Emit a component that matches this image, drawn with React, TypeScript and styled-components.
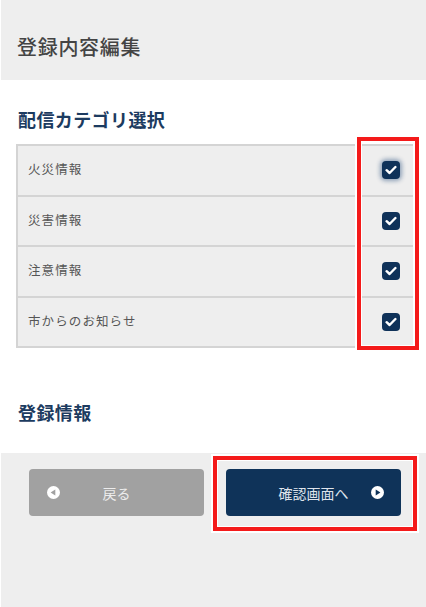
import React from 'react';
import styled, { createGlobalStyle } from 'styled-components';

const GlobalStyle = createGlobalStyle`
  html, body {
    margin: 0;
    padding: 0;
    background: #ffffff;
  }
  body {
    font-family: "Noto Sans CJK JP", "Noto Sans", sans-serif;
  }
`;

const Page = styled.div`
  min-height: 100vh;
  display: flex;
  flex-direction: column;
  padding-left: 1px;
  box-sizing: border-box;
`;

const Header = styled.header`
  height: 80px;
  background: #eeeeee;
  display: flex;
  align-items: center;
  padding: 12px 0 0 16px;
  box-sizing: border-box;
`;

const PageTitle = styled.h1`
  margin: 0;
  font-size: 20px;
  font-weight: 500;
  letter-spacing: 0.7px;
  color: #444444;
`;

const Main = styled.main`
  padding: 27px 13px 29px 15px;
`;

const SectionTitle = styled.h2<{ $gap?: number }>`
  margin: 0 0 ${p => p.$gap ?? 13}px 2px;
  font-size: 18px;
  line-height: 24px;
  font-weight: 700;
  letter-spacing: 0.4px;
  color: #1c3b60;
`;

const CategoryTable = styled.div`
  position: relative;
  border-left: 2px solid #d4d4d4;
  border-bottom: 2px solid #d4d4d4;
  margin-bottom: 52px;
`;

const Row = styled.div`
  display: flex;
  align-items: center;
  height: 50.5px;
  box-sizing: border-box;
  border-top: 2px solid #d4d4d4;
  background: #eeeeee;
`;

const Label = styled.span`
  flex: 1;
  padding: 0 0 3px 10px;
  font-size: 12.5px;
  letter-spacing: 1.1px;
  color: #555555;
`;

const CheckCell = styled.div`
  width: 51px;
  display: flex;
  justify-content: center;
  padding-left: 6px;
  box-sizing: border-box;
`;

const CheckBox = styled.span<{ $focused?: boolean }>`
  width: 18px;
  height: 18px;
  border-radius: 4px;
  background: #0f3259;
  display: flex;
  align-items: center;
  justify-content: center;
  box-shadow: ${p => (p.$focused ? '0 0 4px 2px rgba(30, 70, 120, 0.45)' : 'none')};
`;

const Highlight = styled.div`
  position: absolute;
  border: 4px solid #f41a1a;
  box-shadow: 0 0 0 2px #ffffff, inset 0 0 0 1px #ffffff;
  pointer-events: none;
  box-sizing: border-box;
`;

const ColumnHighlight = styled(Highlight)`
  top: -7px;
  bottom: -4px;
  right: -6px;
  width: 62px;
`;

const Footer = styled.footer`
  flex: 1;
  background: #eeeeee;
  display: flex;
  gap: 22px;
  padding: 16px 25px 0 28px;
  align-items: flex-start;
`;

const ButtonSlot = styled.div`
  position: relative;
  flex: 1;
  display: flex;
`;

const ButtonHighlight = styled(Highlight)`
  top: -13px;
  bottom: -15px;
  left: -13px;
  right: -16px;
`;

const NavButton = styled.button<{ $primary?: boolean }>`
  flex: 1;
  height: 47px;
  border: none;
  border-radius: 4px;
  background: ${p => (p.$primary ? '#0f3359' : '#a1a1a1')};
  color: ${p => (p.$primary ? '#dfe4ec' : '#ececec')};
  font-family: inherit;
  font-size: 14px;
  display: grid;
  grid-template-columns: 48px 1fr 48px;
  align-items: center;
  padding: 0;
  cursor: pointer;
`;

const IconSlot = styled.span`
  display: flex;
  justify-content: center;
`;

const CheckMark = () => (
  <svg width="12" height="10" viewBox="0 0 12 10">
    <polyline
      points="1.6,5.2 4.6,8 10.4,2"
      fill="none"
      stroke="#ffffff"
      strokeWidth="2.4"
      strokeLinecap="round"
      strokeLinejoin="round"
    />
  </svg>
);

const CircleArrow = ({ dir, color }: { dir: 'left' | 'right'; color: string }) => (
  <svg width="13" height="13" viewBox="0 0 13 13">
    <circle cx="6.5" cy="6.5" r="6.5" fill="#ffffff" />
    {dir === 'left' ? (
      <polygon points="8.3,3.4 8.3,9.6 3.6,6.5" fill={color} />
    ) : (
      <polygon points="4.7,3.4 4.7,9.6 9.4,6.5" fill={color} />
    )}
  </svg>
);

const categories = ['火災情報', '災害情報', '注意情報', '市からのお知らせ'];

export default function App() {
  return (
    <Page>
      <GlobalStyle />
      <Header>
        <PageTitle>登録内容編集</PageTitle>
      </Header>

      <Main>
        <SectionTitle>配信カテゴリ選択</SectionTitle>
        <CategoryTable>
          {categories.map((name, i) => (
            <Row key={name}>
              <Label>{name}</Label>
              <CheckCell>
                <CheckBox $focused={i === 0}>
                  <CheckMark />
                </CheckBox>
              </CheckCell>
            </Row>
          ))}
          <ColumnHighlight />
        </CategoryTable>

        <SectionTitle $gap={0}>登録情報</SectionTitle>
      </Main>

      <Footer>
        <ButtonSlot>
          <NavButton>
            <IconSlot>
              <CircleArrow dir="left" color="#a1a1a1" />
            </IconSlot>
            <span>戻る</span>
            <span />
          </NavButton>
        </ButtonSlot>
        <ButtonSlot>
          <NavButton $primary>
            <span />
            <span>確認画面へ</span>
            <IconSlot>
              <CircleArrow dir="right" color="#0f3359" />
            </IconSlot>
          </NavButton>
          <ButtonHighlight />
        </ButtonSlot>
      </Footer>
    </Page>
  );
}
